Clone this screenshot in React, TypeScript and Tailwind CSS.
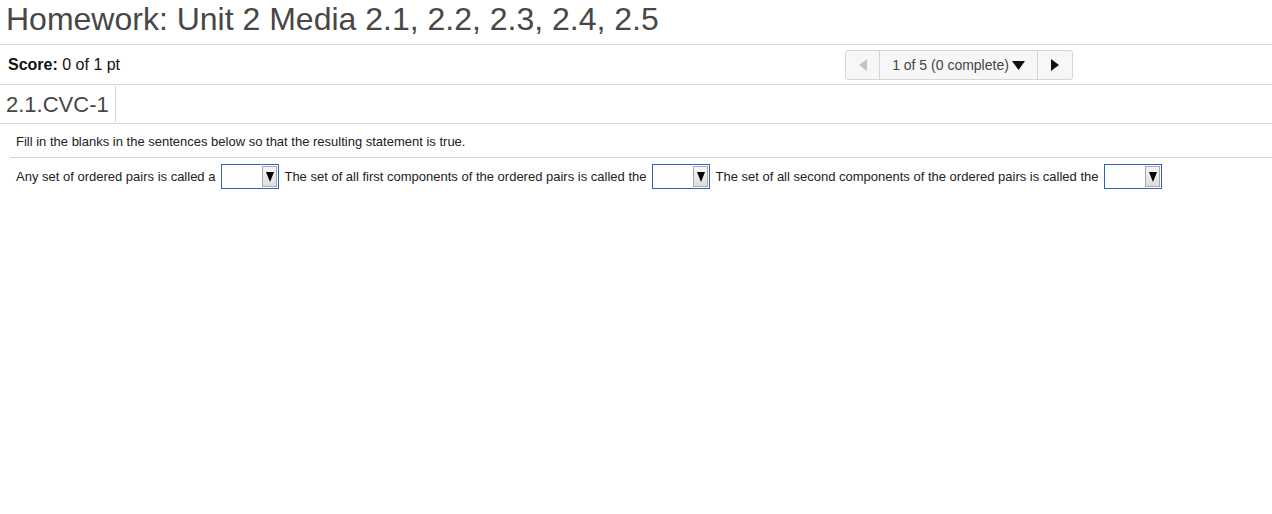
import React from 'react';

const Blank: React.FC = () => (
  <span className="inline-flex items-center justify-end w-[58px] h-[25px] border border-[#2f62c3] bg-white ml-[6px] mr-[5px] pr-[1px] align-middle">
    <span className="flex items-center justify-center w-[15px] h-[21px] border border-[#a9a9a9] bg-gradient-to-b from-[#f6f6f6] to-[#dddddd]">
      <svg width="8" height="10" viewBox="0 0 8 10"><path d="M0 0 H8 L4 10 Z" fill="#000" /></svg>
    </span>
  </span>
);

const App: React.FC = () => {
  return (
    <div className="w-[1272px] h-[514px] bg-white font-['Liberation_Sans',Arial,sans-serif] text-[#222]">
      {/* Title */}
      <div className="h-[45px] border-b border-[#cdd3e0] pl-[6px]">
        <h1 className="text-[32px] leading-[38px] text-[#474747]">Homework: Unit 2 Media 2.1, 2.2, 2.3, 2.4, 2.5</h1>
      </div>

      {/* Score + pager */}
      <div className="h-[40px] border-b border-[#cdd3e0] flex items-center justify-between pl-[8px] pr-[199px]">
        <div className="text-[16px] text-[#111]">
          <span className="font-bold">Score:</span> 0 of 1 pt
        </div>
        <div className="flex h-[30px] border border-[#d6d6d6] rounded-[3px] bg-[#f7f7f7] mt-[1px]">
          <div className="w-[34px] flex items-center justify-center border-r border-[#d6d6d6]">
            <svg width="8" height="12" viewBox="0 0 8 12"><path d="M8 0 L0 6 L8 12 Z" fill="#c4c4c4" /></svg>
          </div>
          <div className="w-[158px] flex items-center justify-center gap-[3px] border-r border-[#d6d6d6] text-[14px] text-[#444]">
            1 of 5 (0 complete)
            <svg width="13" height="9" viewBox="0 0 13 9"><path d="M0 0 H13 L6.5 9 Z" fill="#111" /></svg>
          </div>
          <div className="w-[34px] flex items-center justify-center">
            <svg width="8" height="12" viewBox="0 0 8 12"><path d="M0 0 L8 6 L0 12 Z" fill="#111" /></svg>
          </div>
        </div>
      </div>

      {/* Question id */}
      <div className="h-[39px] border-b border-[#cdd3e0] flex">
        <div className="h-[36px] mt-[1px] pl-[6px] pr-[6px] border-r border-[#cdd3e0] flex items-center text-[22px] text-[#474747]">
          2.1.CVC-1
        </div>
      </div>

      {/* Question body */}
      <div className="pl-[10px]">
        <div className="h-[34px] border-b border-[#cdd3e0] flex items-center pl-[6px] pt-[3px] text-[13px]">
          Fill in the blanks in the sentences below so that the resulting statement is true.
        </div>
        <div className="pl-[6px] pt-[6px] text-[13px] leading-[25px] flex items-center">
          Any set of ordered pairs is called a
          <Blank />
          The set of all first components of the ordered pairs is called the
          <Blank />
          The set of all second components of the ordered pairs is called the
          <Blank />
        </div>
      </div>
    </div>
  );
};

export default App;
